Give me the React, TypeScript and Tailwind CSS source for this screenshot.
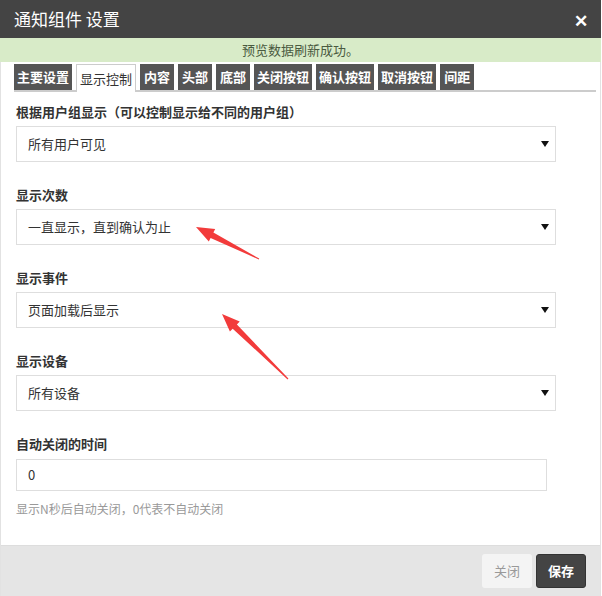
import React from "react";

const tabs = ["主要设置", "显示控制", "内容", "头部", "底部", "关闭按钮", "确认按钮", "取消按钮", "间距"];

function Caret() {
  return (
    <svg width="8" height="8" viewBox="0 0 8 8" className="shrink-0">
      <polygon points="0,1 8,1 4,7" fill="#111" />
    </svg>
  );
}

function SelectBox({ value }: { value: string }) {
  return (
    <div className="flex items-center justify-between w-[540px] h-[36px] border border-[#dedede] bg-white pl-[11px] pr-[6px]">
      <span className="text-[13px] text-[#333]">{value}</span>
      <Caret />
    </div>
  );
}

function Field({ label, children }: { label: string; children: React.ReactNode }) {
  return (
    <div className="mb-[23px]">
      <div className="h-[20px] leading-[20px] text-[13px] font-bold text-[#333] mb-[4px]">{label}</div>
      {children}
    </div>
  );
}

export default function App() {
  return (
    <div
      className="relative w-[601px] h-[596px] flex flex-col bg-white"
      style={{ fontFamily: '"Noto Sans CJK SC", "Liberation Sans", sans-serif' }}
    >
      {/* header */}
      <div className="h-[38px] bg-[#444] flex items-center justify-between pl-[14px] pr-[13px]">
        <span className="text-[17px] text-white">通知组件 设置</span>
        <span className="text-[17px] font-bold text-white leading-none">✕</span>
      </div>
      <div className="h-[24px] bg-[#d8ebc8] flex items-center justify-center text-[13px] text-[#4a5a40]">
        预览数据刷新成功。
      </div>

      <div className="flex-1 flex flex-col border-x border-[#e2e2e2]">
        {/* tabs */}
        <div className="flex gap-[4px] mt-[2px] ml-[13px] mr-[4px] border-b-2 border-[#ccc] h-[28px]">
          {tabs.map((t, i) => {
            const pad = t.length > 2 ? "px-[3px]" : "px-[4px]";
            return i === 1 ? (
              <div
                key={t}
                className={`h-[28px] ${pad} flex items-center bg-white border border-b-0 border-[#ccc] text-[13px] text-[#333] -mb-[2px]`}
              >
                {t}
              </div>
            ) : (
              <div key={t} className={`h-[26px] ${pad} flex items-center bg-[#555] text-[13px] font-bold text-white`}>
                {t}
              </div>
            );
          })}
        </div>

        {/* form */}
        <div className="pl-[15px] pt-[10px] flex-1">
          <Field label="根据用户组显示（可以控制显示给不同的用户组）">
            <SelectBox value="所有用户可见" />
          </Field>
          <Field label="显示次数">
            <SelectBox value="一直显示，直到确认为止" />
          </Field>
          <Field label="显示事件">
            <SelectBox value="页面加载后显示" />
          </Field>
          <Field label="显示设备">
            <SelectBox value="所有设备" />
          </Field>
          <div>
            <div className="h-[20px] leading-[20px] text-[13px] font-bold text-[#333] mb-[5px]">自动关闭的时间</div>
            <div className="w-[531px] h-[32px] border border-[#dedede] flex items-center pl-[11px] text-[13px] text-[#333]">
              0
            </div>
            <div className="mt-[9px] text-[12px] text-[#999]">显示N秒后自动关闭，0代表不自动关闭</div>
          </div>
        </div>

        {/* footer */}
        <div className="h-[51px] bg-[#e5e5e5] border-t border-[#ddd] flex items-center justify-end gap-[4px] pr-[14px]">
          <div className="w-[50px] h-[34px] rounded-[3px] bg-[#f4f4f4] flex items-center justify-center text-[13px] text-[#999]">
            关闭
          </div>
          <div className="w-[50px] h-[34px] rounded-[3px] bg-[#444] border border-[#333] flex items-center justify-center text-[13px] font-bold text-white">
            保存
          </div>
        </div>
      </div>

      {/* annotation arrows */}
      <svg className="absolute inset-0 pointer-events-none" width="601" height="596">
        <polygon
          points="196,227 215.2,229 213.4,232.5 259.2,258.6 258.8,259.4 210.6,237.9 208.8,241.4"
          fill="#f23b3b"
        />
        <polygon
          points="222,314 239.7,321.6 236.9,324.5 288.4,378.6 287.6,379.4 232.7,328.7 229.9,331.6"
          fill="#f23b3b"
        />
      </svg>
    </div>
  );
}
